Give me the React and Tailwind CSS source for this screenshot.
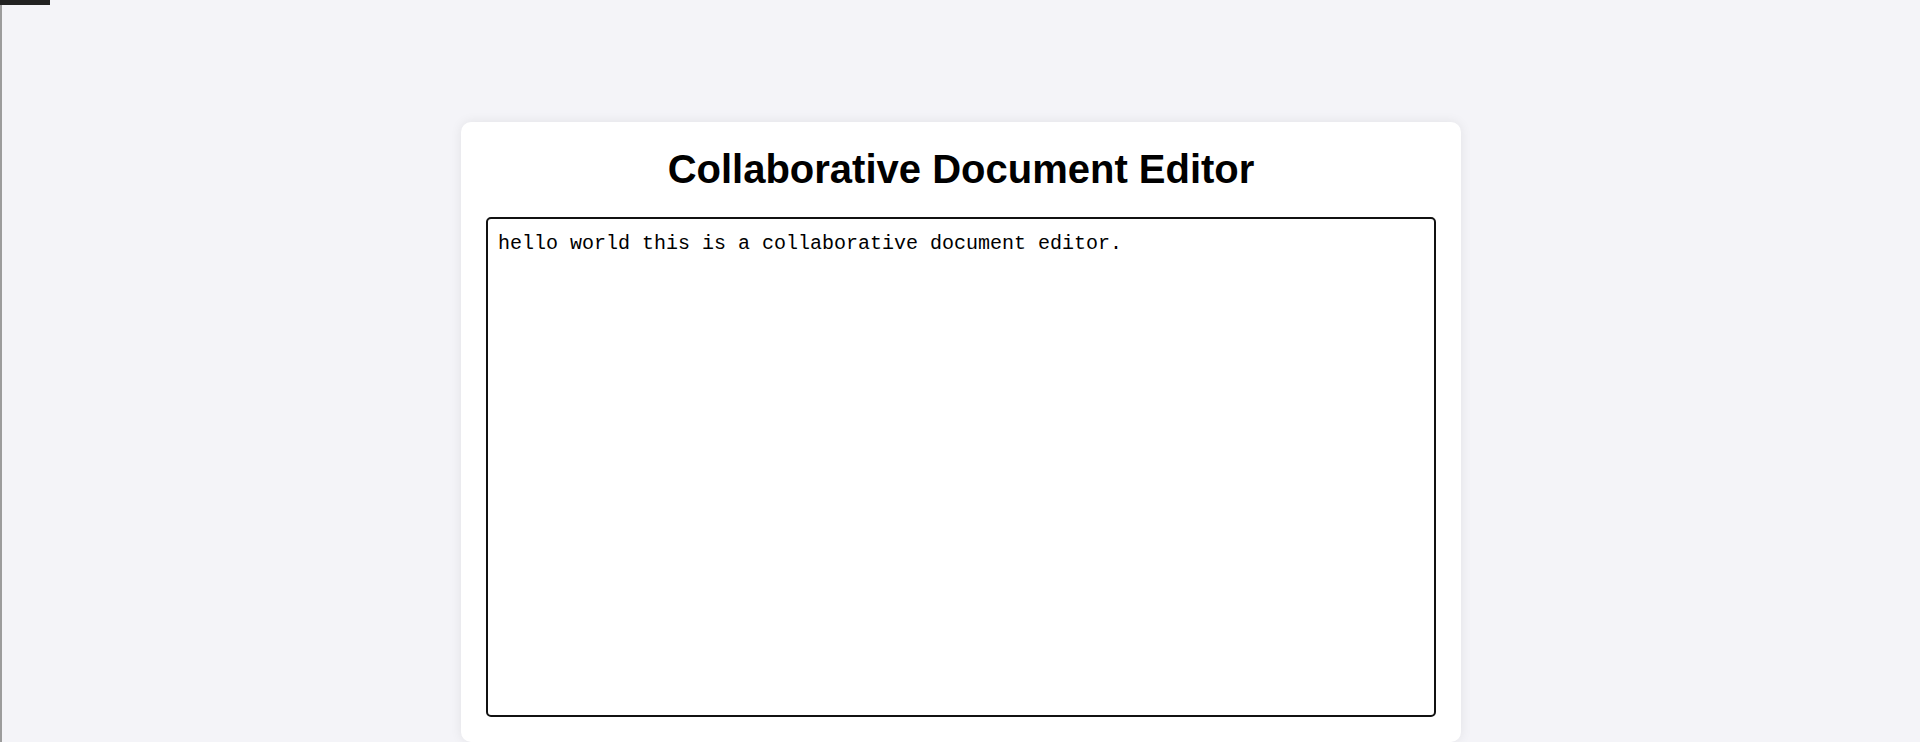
import React, { useState } from 'react';

const App = () => {
  const [text, setText] = useState('hello world this is a collaborative document editor.');

  return (
    <div className="h-[742px] bg-[#f4f4f8] flex flex-col overflow-hidden">
      {/* top-left strip */}
      <div className="h-[5px] w-[50px] bg-[#222222] shrink-0"></div>

      <div className="flex-1 border-l-2 border-[#9c9c9c] flex justify-center pt-[117px]">
        {/* Editor card */}
        <div className="w-[1000px] h-[620px] bg-white rounded-[10px] shadow-[0_0_12px_rgba(0,0,0,0.08)] p-[25px] flex flex-col">
          <h1 className="text-[40px] leading-[45px] font-bold text-black text-center mb-[25px] font-['Liberation_Sans',Arial,sans-serif]">
            Collaborative Document Editor
          </h1>
          <textarea
            value={text}
            onChange={(e) => setText(e.target.value)}
            spellCheck={false}
            className="w-full h-[500px] border-2 border-[#111111] rounded-[5px] p-[10px] text-[20px] leading-[1.5] text-black bg-white resize-none outline-none font-['Liberation_Mono','Courier_New',monospace]"
          />
        </div>
      </div>
    </div>
  );
};

export default App;
